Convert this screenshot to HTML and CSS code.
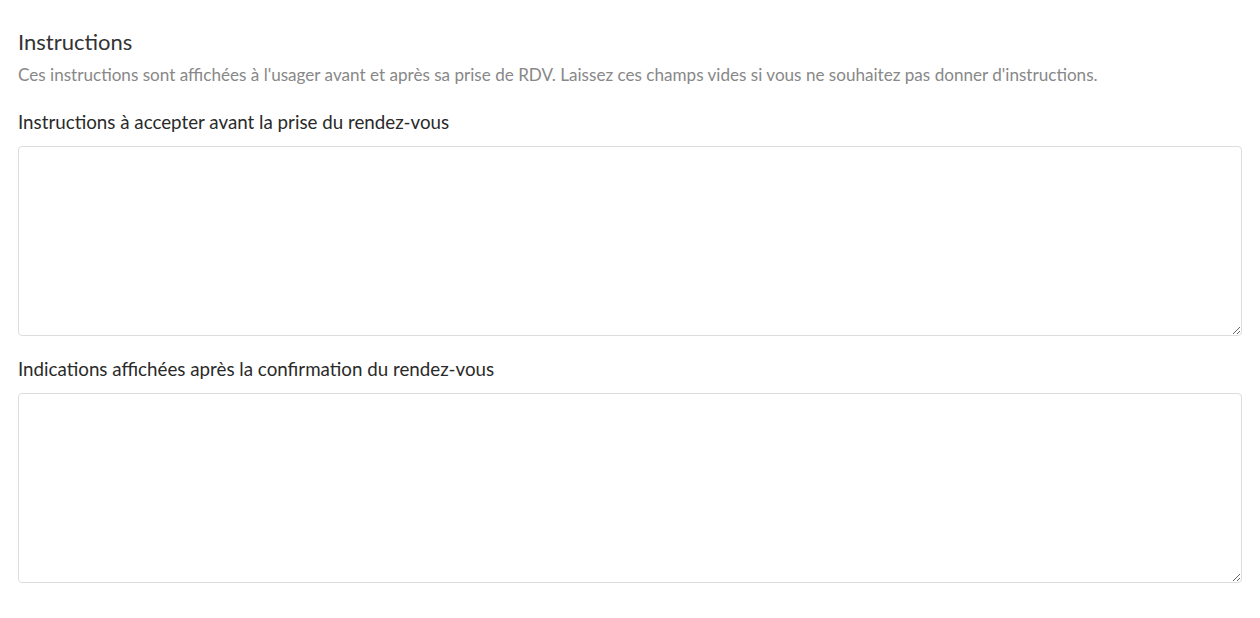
FILE: index.html
```html
<!DOCTYPE html>
<html lang="fr">
<head>
<meta charset="utf-8">
<title>Instructions</title>
<link rel="stylesheet" href="styles.css">
</head>
<body>
<section class="panel">
  <h2 class="title">Instructions</h2>
  <p class="hint">Ces instructions sont affichées à l'usager avant et après sa prise de RDV. Laissez ces champs vides si vous ne souhaitez pas donner d'instructions.</p>
  <div class="field">
    <label class="label" for="before">Instructions à accepter avant la prise du rendez-vous</label>
    <textarea class="area" id="before"></textarea>
  </div>
  <div class="field">
    <label class="label" for="after">Indications affichées après la confirmation du rendez-vous</label>
    <textarea class="area" id="after"></textarea>
  </div>
</section>
</body>
</html>
```
FILE: styles.css
```css
html, body {
  margin: 0;
  padding: 0;
  background: #fff;
}
body {
  font-family: Lato, "Liberation Sans", sans-serif;
  color: #333;
}
.panel {
  padding: 28px 18px 0 18px;
  display: flex;
  flex-direction: column;
}
.title {
  margin: 0;
  font-size: 22px;
  font-weight: 400;
  line-height: 28px;
  color: #333;
}
.hint {
  margin: 7px 0 0 0;
  font-size: 17.1px;
  line-height: 24px;
  color: #888;
  white-space: nowrap;
}
.field {
  display: flex;
  flex-direction: column;
  margin-top: 23px;
}
.field + .field {
  margin-top: 21px;
}
.label {
  font-size: 18.75px;
  line-height: 24px;
  color: #2a2a2a;
  margin-bottom: 12px;
}
.area {
  box-sizing: border-box;
  width: 100%;
  height: 190px;
  border: 1px solid #ddd;
  border-radius: 4px;
  padding: 6px 12px;
  font-family: inherit;
  font-size: 14px;
  resize: vertical;
  outline: none;
}
```
